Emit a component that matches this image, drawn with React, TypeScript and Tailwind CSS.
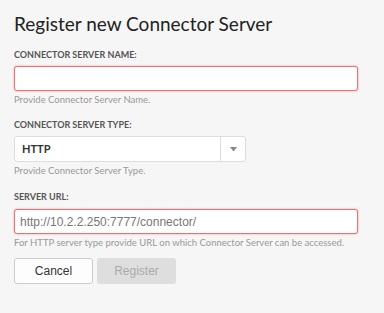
import React from "react";

const sans = { fontFamily: "Lato, 'Noto Sans', sans-serif" };
const helv = { fontFamily: "'Liberation Sans', Arial, sans-serif" };

function Label({ children }: { children: React.ReactNode }) {
  return (
    <div className="text-[9px] font-bold leading-[12px] text-[#555]" style={sans}>
      {children}
    </div>
  );
}

function Help({ children }: { children: React.ReactNode }) {
  return (
    <div className="text-[9.5px] leading-[12px] text-[#999]" style={sans}>
      {children}
    </div>
  );
}

export default function App() {
  return (
    <div className="w-[384px] h-[313px] bg-[#f6f6f6] px-[14px] pt-[13px]">
      <h1 className="text-[19px] leading-[22px] text-[#222] font-normal" style={sans}>
        Register new Connector Server
      </h1>
      <div className="mt-[14px]">
        <Label>CONNECTOR SERVER NAME:</Label>
      </div>
      <div className="mt-[5px] w-[344px] h-[25px] bg-white border border-[#f07070] rounded-[3px] shadow-[0_0_2px_rgba(240,80,80,0.6)]" />
      <div className="mt-[3px]">
        <Help>Provide Connector Server Name.</Help>
      </div>
      <div className="mt-[13px]">
        <Label>CONNECTOR SERVER TYPE:</Label>
      </div>
      <div className="mt-[5px] w-[232px] h-[26px] bg-white border border-[#ddd] rounded-[3px] flex items-center">
        <div className="flex-1 pl-[7px] text-[11px] font-bold text-[#333]" style={sans}>
          HTTP
        </div>
        <div className="w-[25px] h-full border-l border-[#ddd] flex items-center justify-center">
          <svg width="7" height="5" viewBox="0 0 7 5">
            <path d="M0 0 H7 L3.5 4.5 Z" fill="#888" />
          </svg>
        </div>
      </div>
      <div className="mt-[3px]">
        <Help>Provide Connector Server Type.</Help>
      </div>
      <div className="mt-[14px]">
        <Label>SERVER URL:</Label>
      </div>
      <div className="mt-[6px] w-[344px] h-[25px] bg-white border border-[#f07070] rounded-[3px] shadow-[0_0_2px_rgba(240,80,80,0.6)] flex items-center pl-[5px]">
        <span className="text-[12px] text-[#777]" style={helv}>
          http://10.2.2.250:7777/connector/
        </span>
      </div>
      <div className="mt-[3px]">
        <Help>For HTTP server type provide URL on which Connector Server can be accessed.</Help>
      </div>
      <div className="mt-[9px] flex gap-[4px]">
        <button
          className="w-[79px] h-[26px] bg-[#fdfdfd] border border-[#ccc] rounded-[3px] text-[12px] text-[#333]"
          style={helv}
        >
          Cancel
        </button>
        <button
          className="w-[79px] h-[26px] bg-[#dedede] rounded-[3px] text-[12px] text-[#aaa]"
          style={helv}
        >
          Register
        </button>
      </div>
    </div>
  );
}
